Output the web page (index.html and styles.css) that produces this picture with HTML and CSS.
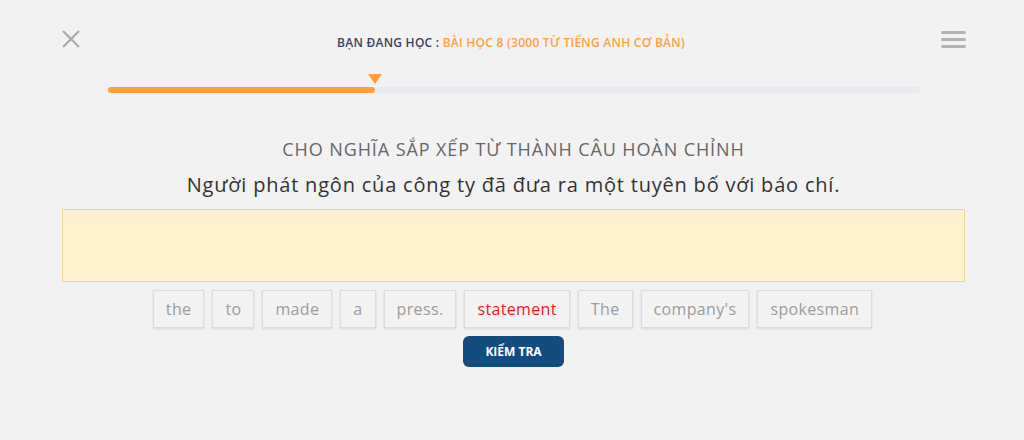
FILE: index.html
```html
<!DOCTYPE html>
<html lang="vi">
<head>
  <meta charset="UTF-8" />
  <meta name="viewport" content="width=device-width, initial-scale=1.0"/>
  <title>Sắp xếp từ</title>
  <link rel="stylesheet" href="styles.css">
</head>
<body>

  <!-- thanh trên cùng -->
  <div class="topbar">
    <button class="icon-btn close" aria-label="Đóng">
      <svg width="18" height="18" viewBox="0 0 18 18"><path d="M1 1L17 17M17 1L1 17" stroke="#aaa" stroke-width="2.2" fill="none"/></svg>
    </button>
    <div class="lesson">BẠN ĐANG HỌC : <span class="lesson-name">BÀI HỌC 8 (3000 TỪ TIẾNG ANH CƠ BẢN)</span></div>
    <button class="icon-btn menu" aria-label="Menu">
      <span></span><span></span><span></span>
    </button>
  </div>

  <!-- tiến độ -->
  <div class="progress">
    <div class="progress-fill" style="width: 32.9%"></div>
    <div class="marker" style="left: 32.9%"></div>
  </div>

  <!-- câu hỏi -->
  <div class="quiz">
    <h2 class="instruction">CHO NGHĨA SẮP XẾP TỪ THÀNH CÂU HOÀN CHỈNH</h2>
    <p class="sentence">Người phát ngôn của công ty đã đưa ra một tuyên bố với báo chí.</p>
    <div class="answer-box"></div>
    <div class="words">
      <span class="word">the</span>
      <span class="word">to</span>
      <span class="word">made</span>
      <span class="word">a</span>
      <span class="word">press.</span>
      <span class="word wrong">statement</span>
      <span class="word">The</span>
      <span class="word">company's</span>
      <span class="word">spokesman</span>
    </div>
    <button class="check">KIỂM TRA</button>
  </div>

</body>
</html>
```

FILE: styles.css
```css
body {
  margin: 0;
  font-family: 'Open Sans', 'Noto Sans', sans-serif;
  background-color: #f2f2f2;
  color: #333;
}
.topbar {
  display: flex;
  align-items: center;
  justify-content: space-between;
  padding: 29px 58px 0 61px;
  height: 20px;
}
.icon-btn {
  background: none;
  border: none;
  padding: 0;
  cursor: pointer;
}
.close { width: 20px; height: 20px; display: flex; align-items: center; justify-content: center; }
.menu {
  width: 25px;
  display: flex;
  flex-direction: column;
  gap: 4px;
}
.menu span {
  display: block;
  height: 3px;
  background-color: #b3b3b3;
  border-radius: 2px;
}
.lesson {
  font-size: 12px;
  font-weight: 600;
  color: #3b4262;
  letter-spacing: 0.25px;
  margin-top: 6px;
}
.lesson-name { color: #ffa142; }
.progress {
  position: relative;
  margin: 38px 104px 0 108px;
  height: 6px;
  border-radius: 3px;
  background-color: #e8ecf0;
}
.progress-fill {
  height: 100%;
  border-radius: 3px;
  background-color: #ffa03c;
}
.marker {
  position: absolute;
  top: -13px;
  margin-left: -7px;
  width: 0;
  height: 0;
  border-left: 7px solid transparent;
  border-right: 7px solid transparent;
  border-top: 10px solid #ffa03c;
}
.quiz {
  text-align: center;
  padding: 0 59px 0 62px;
}
.instruction {
  margin: 44px 0 0;
  font-size: 18px;
  font-weight: 400;
  color: #666;
  letter-spacing: 0.9px;
  line-height: 24px;
}
.sentence {
  margin: 11px 0 0;
  font-size: 20px;
  color: #333;
  letter-spacing: 0.8px;
  line-height: 26px;
}
.answer-box {
  margin-top: 11px;
  height: 71px;
  background-color: #fef1cf;
  border: 1px solid #efd592;
}
.words {
  display: flex;
  justify-content: center;
  gap: 8px;
  margin-top: 8px;
  padding-right: 2px;
}
.word {
  display: inline-block;
  padding: 0 12px;
  height: 36px;
  line-height: 36px;
  font-size: 16px;
  letter-spacing: 0.35px;
  color: #9c9c9c;
  background-color: #f3f3f3;
  border: 1px solid #dcdcdc;
  box-shadow: 0 1px 2px rgba(0, 0, 0, 0.12);
}
.wrong { color: #f5141e; }
.check {
  margin-top: 8px;
  width: 101px;
  height: 31px;
  font-family: inherit;
  font-size: 12px;
  font-weight: 700;
  color: #fff;
  background-color: #134d80;
  border: none;
  border-radius: 6px;
  cursor: pointer;
}
```
